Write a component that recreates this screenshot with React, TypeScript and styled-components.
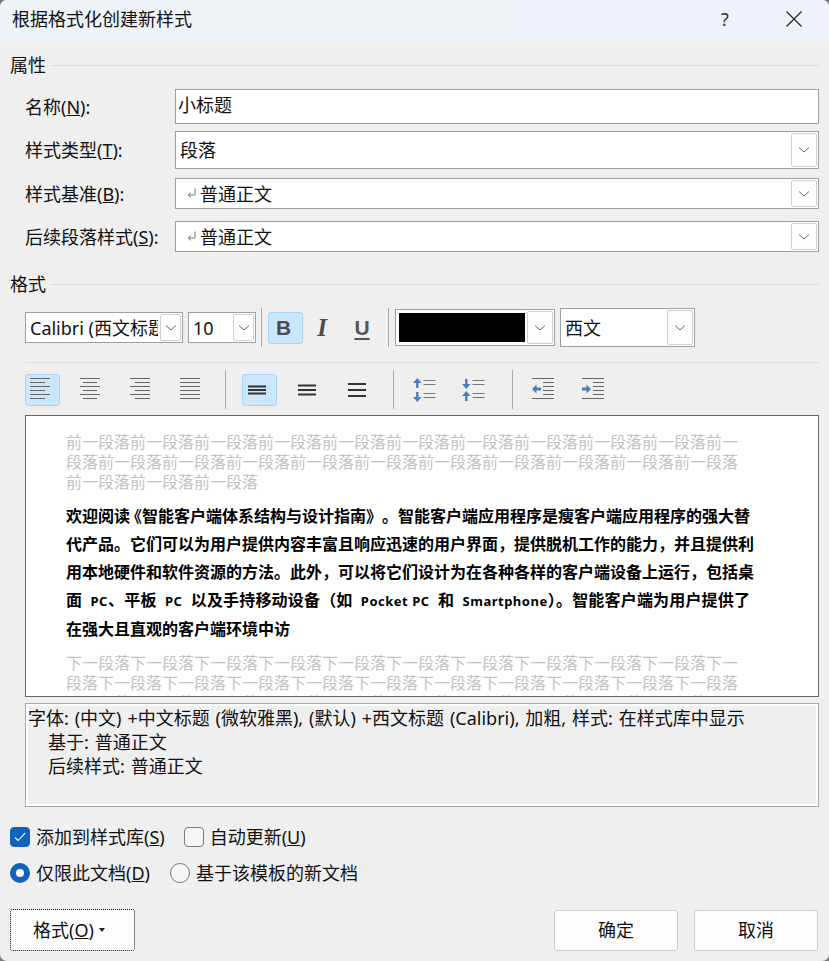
import React from "react";
import styled, { createGlobalStyle } from "styled-components";

const GlobalStyle = createGlobalStyle`
  html, body {
    margin: 0;
    padding: 0;
    background: #7d7d7d;
  }
`;

const Window = styled.div`
  width: 829px;
  height: 961px;
  overflow: hidden;
  border-radius: 7px;
  background: #efefef;
  color: #111;
  font-family: "Noto Sans", "Noto Sans CJK SC", sans-serif;
  font-size: 18px;
  line-height: 24px;
`;

const TitleBar = styled.div`
  height: 41px;
  display: flex;
  align-items: center;
  padding: 0 27px 4px 12px;
  box-sizing: border-box;
  background: linear-gradient(90deg, #eef3f7, #eef3fa);
`;

const Title = styled.div`
  flex: 1;
`;

const HelpMark = styled.div`
  width: 20px;
  text-align: center;
  margin-right: 51px;
  color: #333;
`;

const Content = styled.div`
  padding: 0 10px;
`;

const SectionHead = styled.div<{ $top: number }>`
  display: flex;
  align-items: center;
  gap: 5px;
  margin-top: ${(p) => p.$top}px;
  &::after {
    content: "";
    flex: 1;
    height: 1px;
    background: #dcdcdc;
  }
`;

const Indent = styled.div`
  padding-left: 15px;
`;

const FieldRow = styled.div<{ $h: number; $top: number }>`
  display: flex;
  align-items: center;
  height: ${(p) => p.$h}px;
  margin-top: ${(p) => p.$top}px;
`;

const FieldLabel = styled.div`
  width: 150px;
  flex-shrink: 0;
`;

const Box = styled.div<{ $w?: number; $h?: number; $pad?: number; $l?: number }>`
  display: flex;
  align-items: center;
  box-sizing: border-box;
  flex: ${(p) => (p.$w ? "none" : 1)};
  width: ${(p) => (p.$w ? `${p.$w}px` : "auto")};
  height: ${(p) => (p.$h ? `${p.$h}px` : "100%")};
  margin-left: ${(p) => p.$l ?? 0}px;
  padding: 1px 1px 1px ${(p) => p.$pad ?? 3}px;
  background: #fff;
  border: 1px solid #9f9f9f;
  overflow: hidden;
`;

const BoxText = styled.div<{ $lift?: number }>`
  flex: 1;
  min-width: 0;
  margin: 0 2px ${(p) => p.$lift ?? 0}px 0;
  white-space: nowrap;
  overflow: hidden;
`;

const ArrowBtn = styled.div<{ $w?: number }>`
  flex: none;
  width: ${(p) => p.$w ?? 26}px;
  height: 100%;
  display: flex;
  align-items: center;
  justify-content: center;
  box-sizing: border-box;
  background: #fdfdfd;
  border: 1px solid #cfcfcf;
  border-radius: 2px;
`;

const ReturnMark = styled.svg`
  flex: none;
  margin: 0 4px 0 8px;
`;

const Toolbar = styled.div<{ $h: number; $top: number }>`
  display: flex;
  align-items: center;
  height: ${(p) => p.$h}px;
  margin-top: ${(p) => p.$top}px;
`;

const VSep = styled.div<{ $l: number; $r: number }>`
  flex: none;
  width: 1px;
  height: 39px;
  margin: 0 ${(p) => p.$r}px 0 ${(p) => p.$l}px;
  background: #a9a9a9;
`;

const ToolBtn = styled.div<{ $w?: number; $on?: boolean; $r?: number; $shift?: number }>`
  flex: none;
  width: ${(p) => p.$w ?? 35}px;
  height: 32px;
  margin-right: ${(p) => p.$r ?? 0}px;
  padding-right: ${(p) => p.$shift ?? 0}px;
  display: flex;
  align-items: center;
  justify-content: center;
  box-sizing: border-box;
  border-radius: 3px;
  border: 1px solid ${(p) => (p.$on ? "#a6d3f7" : "transparent")};
  background: ${(p) => (p.$on ? "#cce6fb" : "transparent")};
`;

const BoldGlyph = styled.span`
  font: 700 21px "Liberation Sans", sans-serif;
  color: #4d4d4d;
`;

const ItalicGlyph = styled.span`
  font: italic 700 25px "Liberation Serif", serif;
  color: #4d4d4d;
`;

const UnderGlyph = styled.span`
  font: 700 21px "Liberation Sans", sans-serif;
  color: #555;
  text-decoration: underline;
  text-underline-offset: 3px;
`;

const Swatch = styled.div`
  flex: 1;
  height: 29px;
  margin: 0 2px 0 3px;
  background: #000;
`;

const HRule = styled.div`
  height: 1px;
  margin-top: 15px;
  background: #dcdcdc;
`;

const Preview = styled.div`
  height: 282px;
  margin-top: 6px;
  padding: 16px 0 0 40px;
  box-sizing: border-box;
  overflow: hidden;
  background: #fff;
  border: 1px solid #666;
`;

const GhostPara = styled.div`
  width: 680px;
  font-size: 16px;
  line-height: 20px;
  color: #c2c2c2;
  word-break: break-all;
`;

const MainPara = styled.div`
  width: 684px;
  margin: 10px 0;
  font-size: 16px;
  line-height: 28px;
  font-weight: 700;
  color: #000;
  text-spacing-trim: space-all;
`;

const MainLine = styled.div<{ $fill?: boolean; $wide?: boolean }>`
  white-space: nowrap;
  text-align: justify;
  text-align-last: ${(p) => (p.$fill ? "justify" : "left")};
  word-spacing: ${(p) => (p.$wide ? 4 : 0)}px;
`;

const Latin = styled.span`
  font-size: 13px;
  letter-spacing: 0.5px;
  word-spacing: 0;
`;

// opening bracket set narrower than one em: its ink is on the right, so trim the left
const TightOpen = styled.span`
  margin-left: -4px;
`;

// closing bracket set narrower than one em: its ink is on the left, so trim the right
const TightClose = styled.span`
  letter-spacing: -8px;
`;

const Description = styled.div`
  height: 104px;
  margin-top: 6px;
  padding: 2px 2px 0;
  box-sizing: border-box;
  background: #efefef;
  border: 1px solid #a8a8a8;
  box-shadow: inset 0 -2px 0 #fff, inset 2px 0 0 #fff, inset -2px 0 0 #fff, inset 0 2px 0 #fff;
`;

const DescLine = styled.div<{ $sub?: boolean }>`
  padding-left: ${(p) => (p.$sub ? 20 : 0)}px;
  white-space: nowrap;
  word-spacing: 1.2px;
`;

const OptionRow = styled.div<{ $top: number }>`
  display: flex;
  align-items: center;
  height: 24px;
  margin-top: ${(p) => p.$top}px;
`;

const Option = styled.label<{ $r?: number }>`
  display: flex;
  align-items: center;
  gap: 6px;
  margin-right: ${(p) => p.$r ?? 0}px;
`;

const CheckMark = styled.span<{ $on?: boolean }>`
  width: 20px;
  height: 20px;
  flex: none;
  display: flex;
  align-items: center;
  justify-content: center;
  box-sizing: border-box;
  border-radius: 4px;
  background: ${(p) => (p.$on ? "#0f62be" : "#f6f6f6")};
  border: 1px solid ${(p) => (p.$on ? "#0f62be" : "#7a7a7a")};
`;

const RadioMark = styled.span<{ $on?: boolean }>`
  width: 20px;
  height: 20px;
  flex: none;
  box-sizing: border-box;
  border-radius: 50%;
  background: ${(p) => (p.$on ? "#fff" : "#f6f6f6")};
  border: ${(p) => (p.$on ? "6px solid #0f62be" : "1px solid #7a7a7a")};
`;

const Footer = styled.div`
  display: flex;
  align-items: center;
  height: 42px;
  margin-top: 24px;
  padding-right: 1px;
`;

const Button = styled.div<{ $focus?: boolean; $r?: number }>`
  width: ${(p) => (p.$focus ? 125 : 124)}px;
  height: ${(p) => (p.$focus ? 42 : 41)}px;
  margin-right: ${(p) => p.$r ?? 0}px;
  padding-right: ${(p) => (p.$focus ? 7 : 0)}px;
  display: flex;
  align-items: center;
  justify-content: center;
  gap: 5px;
  box-sizing: border-box;
  border-radius: 3px;
  background: #fdfdfd;
  border: 1px ${(p) => (p.$focus ? "dotted #111" : "solid #cdcdcd")};
`;

const Spacer = styled.div`
  flex: 1;
`;

const Caret = styled.span`
  width: 0;
  height: 0;
  border-left: 3.5px solid transparent;
  border-right: 3.5px solid transparent;
  border-top: 4px solid #222;
`;

const LineIcon = styled.svg`
  margin-bottom: 2px;
`;

function Chevron() {
  return (
    <svg width="12" height="8" viewBox="0 0 12 8">
      <polyline points="1,1.5 6,6 11,1.5" fill="none" stroke="#666" strokeWidth="1" />
    </svg>
  );
}

function ReturnIcon() {
  return (
    <ReturnMark width="9" height="11" viewBox="0 0 9 11">
      <path d="M8 0.5V7H1.5M4 4.5L1.2 7L4 9.5" fill="none" stroke="#777" strokeWidth="1" />
    </ReturnMark>
  );
}

// x and width of the six lines of an align icon
const ALIGN_LINES: Record<string, [number, number][]> = {
  left: [[0, 20], [0, 15], [0, 20], [0, 15], [0, 20], [0, 15]],
  center: [[0, 20], [3, 14], [0, 20], [3, 14], [0, 20], [3, 14]],
  right: [[0, 20], [5, 15], [0, 20], [5, 15], [0, 20], [5, 15]],
  justify: [[0, 20], [0, 20], [0, 20], [0, 20], [0, 20], [0, 20]],
};

function AlignIcon({ kind }: { kind: string }) {
  return (
    <LineIcon width="20" height="21" viewBox="0 0 20 21">
      {ALIGN_LINES[kind].map(([x, w], i) => (
        <rect key={i} x={x} y={i * 4} width={w} height="1" fill="#666" />
      ))}
    </LineIcon>
  );
}

function SpacingIcon({ ys }: { ys: number[] }) {
  return (
    <svg width="18" height="18" viewBox="0 0 18 18">
      {ys.map((y) => (
        <rect key={y} x="0" y={y} width="18" height="2" fill="#333" />
      ))}
    </svg>
  );
}

const BLUE = "#4a7fb8";

function upArrow(tip: number) {
  return `M5.3 ${tip}L9.6 ${tip + 5}H6.5V${tip + 10}H4.1V${tip + 5}H1Z`;
}

function downArrow(tip: number) {
  return `M5.3 ${tip}L9.6 ${tip - 5}H6.5V${tip - 10}H4.1V${tip - 5}H1Z`;
}

function LineSpaceIcon({ grow }: { grow?: boolean }) {
  return (
    <svg width="24" height="24" viewBox="0 0 24 24">
      <path d={grow ? upArrow(0) + downArrow(24) : downArrow(11) + upArrow(13)} fill={BLUE} />
      {[2, 6, 15, 19].map((y) => (
        <rect key={y} x="11.5" y={y} width="12" height="1" fill="#777" />
      ))}
    </svg>
  );
}

function IndentIcon({ more }: { more?: boolean }) {
  const arrow = more
    ? "M9 11L4.5 6.5V9.5H0V12.5H4.5V15.5Z"
    : "M0 11L4.5 6.5V9.5H9V12.5H4.5V15.5Z";
  return (
    <LineIcon width="22" height="21" viewBox="0 0 22 21">
      <rect x="0" y="0" width="22" height="1" fill="#666" />
      {[4, 8, 12, 16].map((y) => (
        <rect key={y} x="11" y={y} width="11" height="1" fill="#666" />
      ))}
      <rect x="0" y="20" width="22" height="1" fill="#666" />
      <path d={arrow} fill={BLUE} />
    </LineIcon>
  );
}

const PREV = "前一段落".repeat(24);
const NEXT = "下一段落".repeat(32);

const MAIN_LINES = [
  "代产品。它们可以为用户提供内容丰富且响应迅速的用户界面，提供脱机工作的能力，并且提供利",
  "用本地硬件和软件资源的方法。此外，可以将它们设计为在各种各样的客户端设备上运行，包括桌",
];

export default function App(): JSX.Element {
  return (
    <Window>
      <GlobalStyle />
      <TitleBar>
        <Title>根据格式化创建新样式</Title>
        <HelpMark>?</HelpMark>
        <svg width="16" height="16" viewBox="0 0 16 16">
          <path d="M0.5 0.5L15.5 15.5M15.5 0.5L0.5 15.5" stroke="#222" strokeWidth="1.2" />
        </svg>
      </TitleBar>
      <Content>
        <SectionHead $top={12}>属性</SectionHead>
        <Indent>
          <FieldRow $h={35} $top={12}>
            <FieldLabel>
              名称(<u>N</u>):
            </FieldLabel>
            <Box $pad={2}>
              <BoxText $lift={3}>小标题</BoxText>
            </Box>
          </FieldRow>
          <FieldRow $h={38} $top={7}>
            <FieldLabel>
              样式类型(<u>T</u>):
            </FieldLabel>
            <Box $pad={4}>
              <BoxText>段落</BoxText>
              <ArrowBtn>
                <Chevron />
              </ArrowBtn>
            </Box>
          </FieldRow>
          <FieldRow $h={31} $top={9}>
            <FieldLabel>
              样式基准(<u>B</u>):
            </FieldLabel>
            <Box>
              <ReturnIcon />
              <BoxText>普通正文</BoxText>
              <ArrowBtn>
                <Chevron />
              </ArrowBtn>
            </Box>
          </FieldRow>
          <FieldRow $h={31} $top={12}>
            <FieldLabel>
              后续段落样式(<u>S</u>):
            </FieldLabel>
            <Box>
              <ReturnIcon />
              <BoxText>普通正文</BoxText>
              <ArrowBtn>
                <Chevron />
              </ArrowBtn>
            </Box>
          </FieldRow>
        </Indent>

        <SectionHead $top={20}>格式</SectionHead>
        <Indent>
          <Toolbar $h={39} $top={12}>
            <Box $w={158} $h={31} $pad={4}>
              <BoxText>Calibri (西文标题)</BoxText>
              <ArrowBtn $w={21}>
                <Chevron />
              </ArrowBtn>
            </Box>
            <Box $w={68} $h={31} $pad={4} $l={5}>
              <BoxText>10</BoxText>
              <ArrowBtn $w={21}>
                <Chevron />
              </ArrowBtn>
            </Box>
            <VSep $l={5} $r={6} />
            <ToolBtn $on $shift={4}>
              <BoldGlyph>B</BoldGlyph>
            </ToolBtn>
            <ToolBtn $w={38}>
              <ItalicGlyph>I</ItalicGlyph>
            </ToolBtn>
            <ToolBtn $w={42}>
              <UnderGlyph>U</UnderGlyph>
            </ToolBtn>
            <VSep $l={5} $r={6} />
            <Box $w={160} $h={37} $pad={0}>
              <Swatch />
              <ArrowBtn>
                <Chevron />
              </ArrowBtn>
            </Box>
            <Box $w={135} $h={39} $pad={4} $l={5}>
              <BoxText>西文</BoxText>
              <ArrowBtn>
                <Chevron />
              </ArrowBtn>
            </Box>
          </Toolbar>
          <HRule />
          <Toolbar $h={39} $top={7}>
            <ToolBtn $on $r={12.5} $shift={5}>
              <AlignIcon kind="left" />
            </ToolBtn>
            <ToolBtn $r={15}>
              <AlignIcon kind="center" />
            </ToolBtn>
            <ToolBtn $r={15}>
              <AlignIcon kind="right" />
            </ToolBtn>
            <ToolBtn>
              <AlignIcon kind="justify" />
            </ToolBtn>
            <VSep $l={17} $r={16.5} />
            <ToolBtn $on $r={12.5} $shift={5}>
              <SpacingIcon ys={[4.5, 8, 11.5]} />
            </ToolBtn>
            <ToolBtn $r={15}>
              <SpacingIcon ys={[3.5, 8, 12.5]} />
            </ToolBtn>
            <ToolBtn>
              <SpacingIcon ys={[2, 8, 14]} />
            </ToolBtn>
            <VSep $l={18} $r={13} />
            <ToolBtn $r={14}>
              <LineSpaceIcon grow />
            </ToolBtn>
            <ToolBtn>
              <LineSpaceIcon />
            </ToolBtn>
            <VSep $l={21} $r={13} />
            <ToolBtn $r={15}>
              <IndentIcon />
            </ToolBtn>
            <ToolBtn>
              <IndentIcon more />
            </ToolBtn>
          </Toolbar>
          <Preview>
            <GhostPara>{PREV}</GhostPara>
            <MainPara>
              <MainLine $fill>
                欢迎阅读<TightOpen>《</TightOpen>智能客户端体系结构与设计指南》。智能客户端应用程序是瘦客户端应用程序的强大替
              </MainLine>
              {MAIN_LINES.map((line) => (
                <MainLine key={line} $fill>
                  {line}
                </MainLine>
              ))}
              <MainLine $fill $wide>
                面 <Latin>PC</Latin>、平板 <Latin>PC</Latin> 以及手持移动设备（如 <Latin>Pocket PC</Latin> 和{" "}
                <Latin>Smartphone</Latin>
                <TightClose>）</TightClose>。智能客户端为用户提供了
              </MainLine>
              <MainLine>在强大且直观的客户端环境中访</MainLine>
            </MainPara>
            <GhostPara>{NEXT}</GhostPara>
          </Preview>
          <Description>
            <DescLine>
              字体: (中文) +中文标题 (微软雅黑), (默认) +西文标题 (Calibri), 加粗, 样式: 在样式库中显示
            </DescLine>
            <DescLine $sub>基于: 普通正文</DescLine>
            <DescLine $sub>后续样式: 普通正文</DescLine>
          </Description>
        </Indent>

        <OptionRow $top={18}>
          <Option $r={19}>
            <CheckMark $on>
              <svg width="12" height="10" viewBox="0 0 12 10">
                <polyline points="1,5.5 4.2,8.5 11,1.2" fill="none" stroke="#fff" strokeWidth="1.1" />
              </svg>
            </CheckMark>
            <span>
              添加到样式库(<u>S</u>)
            </span>
          </Option>
          <Option>
            <CheckMark />
            <span>
              自动更新(<u>U</u>)
            </span>
          </Option>
        </OptionRow>
        <OptionRow $top={12}>
          <Option $r={20}>
            <RadioMark $on />
            <span>
              仅限此文档(<u>D</u>)
            </span>
          </Option>
          <Option>
            <RadioMark />
            <span>基于该模板的新文档</span>
          </Option>
        </OptionRow>

        <Footer>
          <Button $focus>
            <span>
              格式(<u>O</u>)
            </span>
            <Caret />
          </Button>
          <Spacer />
          <Button $r={16}>确定</Button>
          <Button>取消</Button>
        </Footer>
      </Content>
    </Window>
  );
}
